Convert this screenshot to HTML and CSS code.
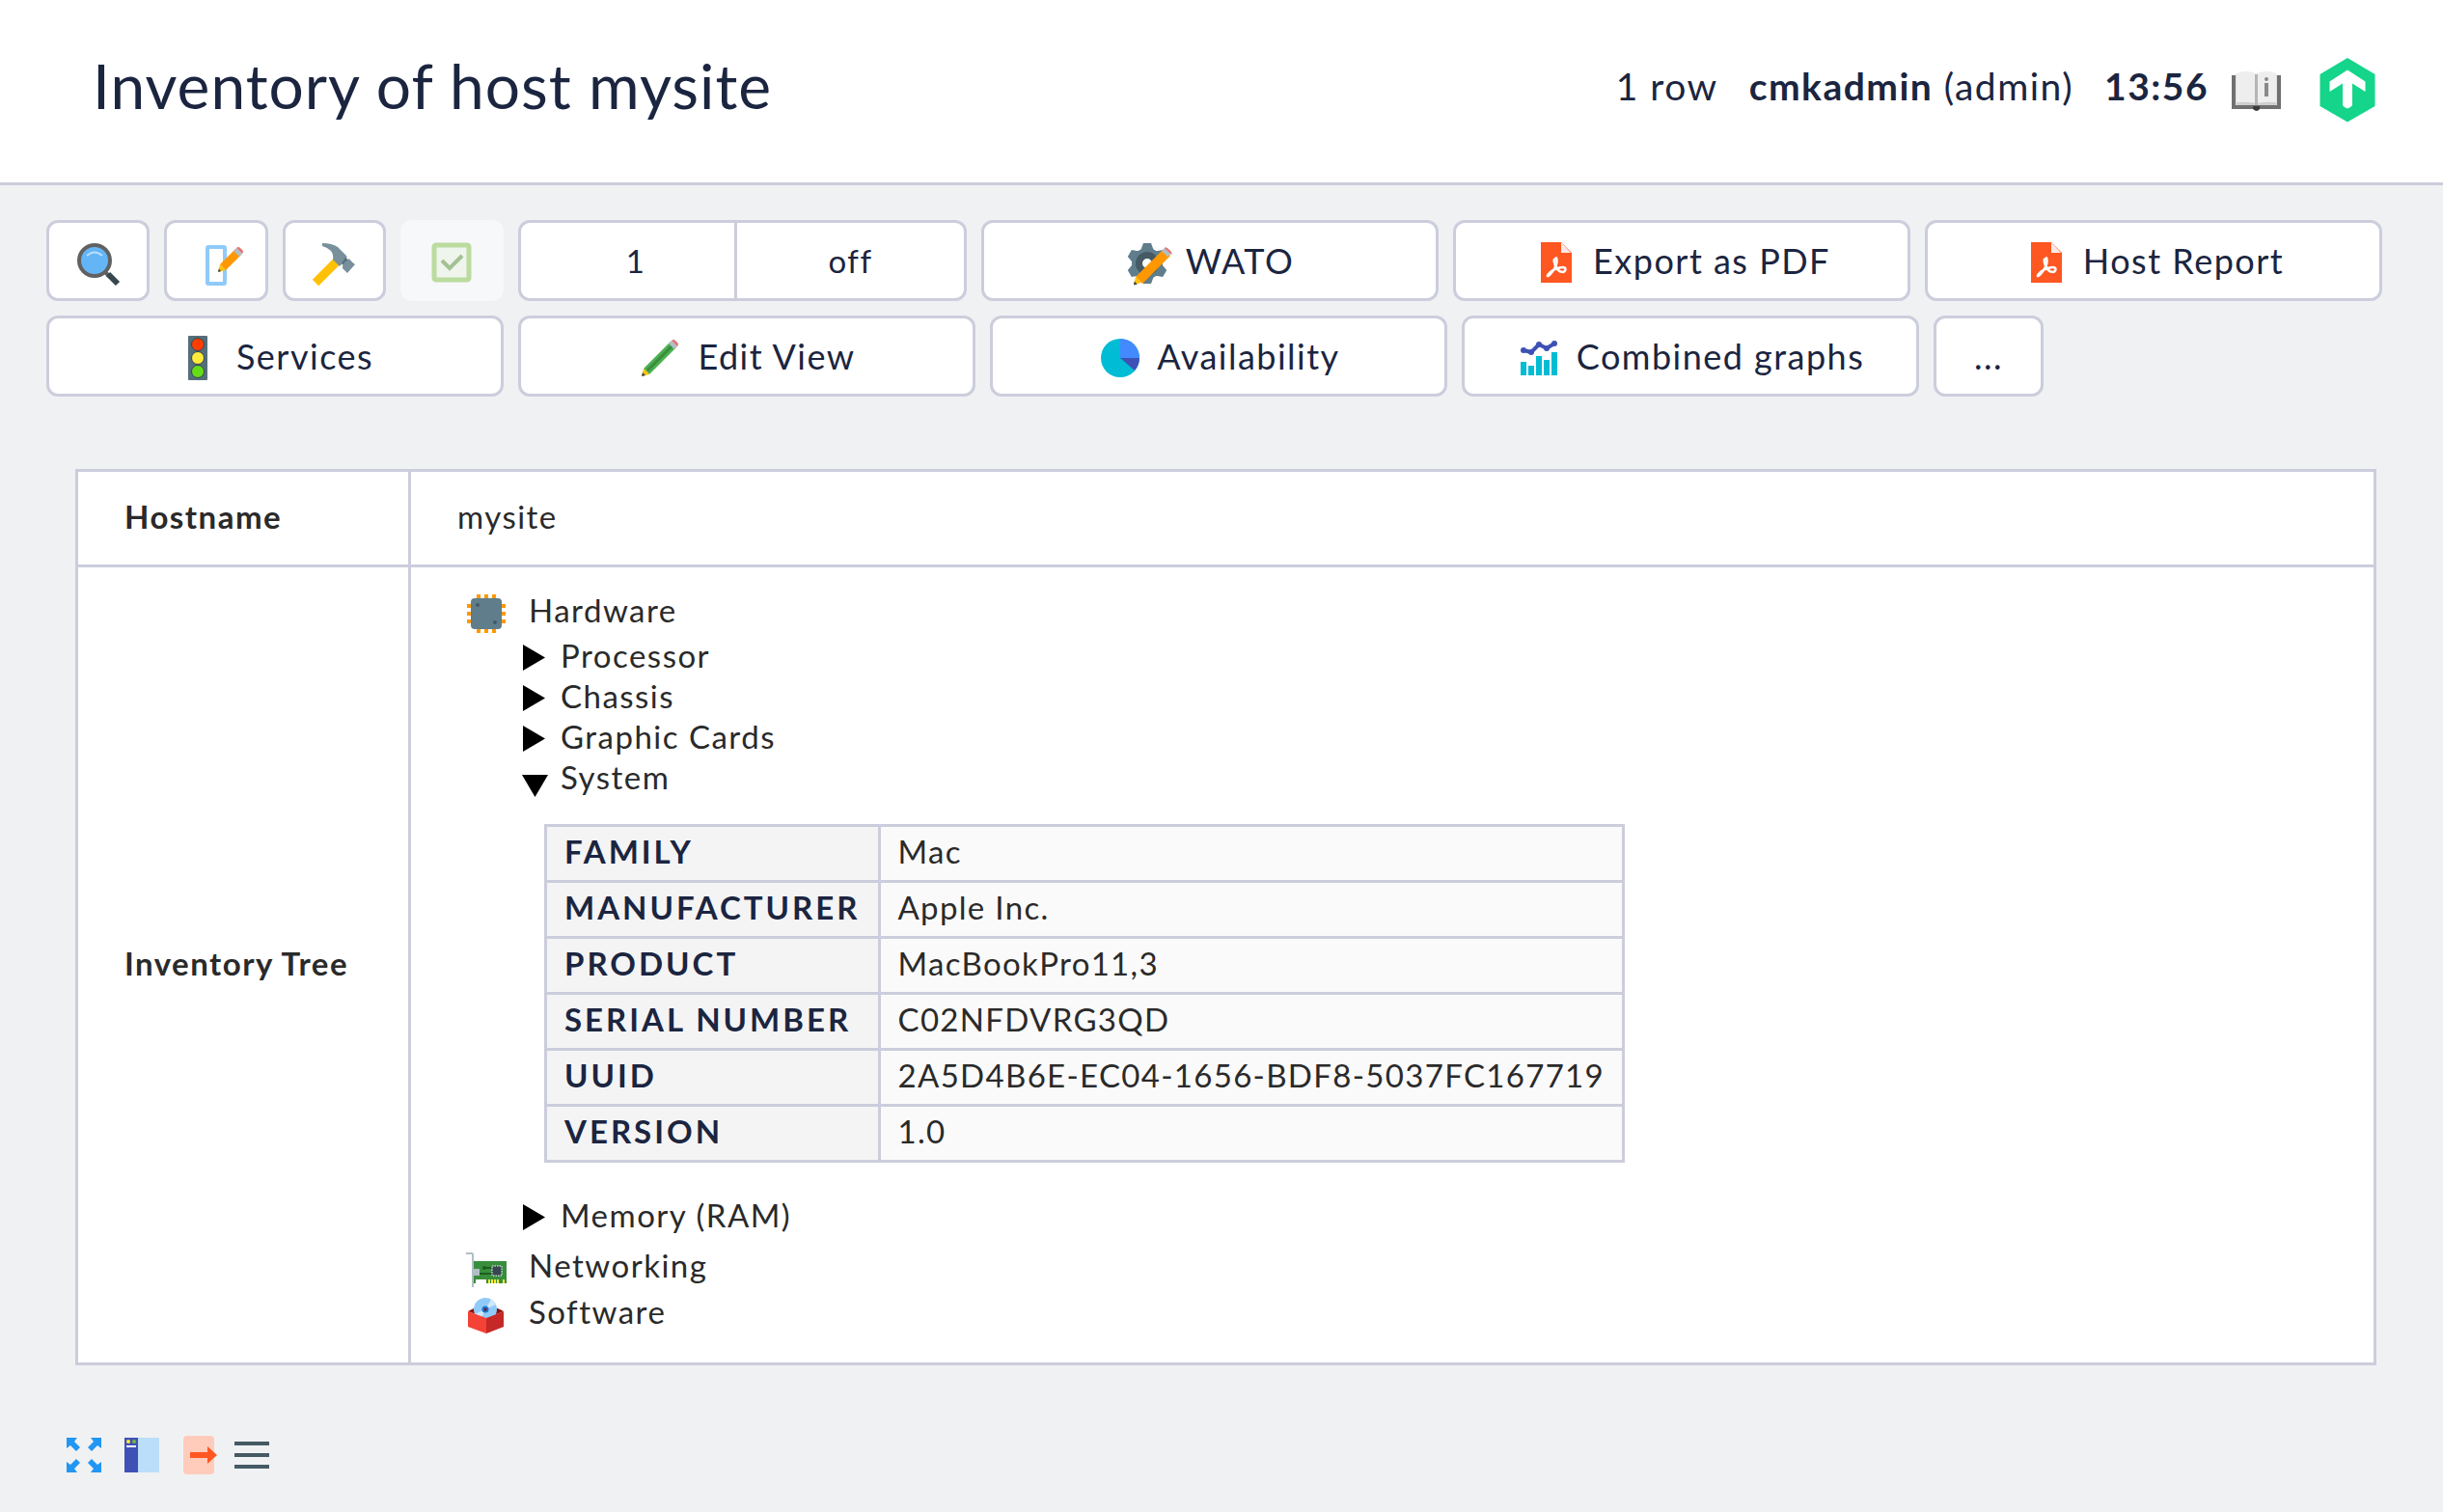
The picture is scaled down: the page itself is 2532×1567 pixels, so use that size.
FILE: index.html
```html
<!DOCTYPE html>
<html lang="en">
<head>
<meta charset="utf-8">
<title>Inventory of host mysite</title>
<link rel="stylesheet" href="styles.css">
</head>
<body>
<header class="page-header">
  <h1 class="page-title">Inventory of host mysite</h1>
  <div class="page-info">
    <span>1 row</span>
    <span><b>cmkadmin</b> (admin)</span>
    <b>13:56</b>
  </div>
  <a class="header-link" href="#manual" aria-label="Manual">
    <svg width="52" height="48" viewBox="0 0 52 48"><path fill="#707070" d="M0 13h51v35H0z"/><path fill="#e0e0e0" d="M4 12h43v32H4z"/><path fill="#eee" d="M5 11Q14 7 25 11V44Q14 40 5 42zM26 11Q36 7 46 11V42Q36 40 26 44z"/><path fill="#cfcfcf" d="M5 41Q15 40 25 42V44H5zM26 42Q36 40 46 41V44H26z"/><path fill="#b5b5b5" d="M24 12h3v32h-3z"/><path fill="#3c3c3c" d="M22 45h7v3q-3 4-7 0z"/><path fill="#8a8a8a" d="M34 21h4v14h-4z"/><circle cx="36" cy="17" r="2" fill="#8a8a8a"/></svg>
  </a>
  <a class="header-link header-logo" href="#home" aria-label="Home">
    <svg width="58" height="66" viewBox="0 0 58 66"><path fill="#15d58b" d="M29 4 57.500 21V54L29 70.500.500 54V21z"/><path fill="#fff" d="M29 16.500 47.500 28.500V39L34 30.500V52.500Q34 54.500 29 56.500Q24 54.500 24 52.500V30.500L10.500 39V28.500z"/></svg>
  </a>
</header>

<nav class="toolbar">
  <div class="icon-group">
    <button class="btn btn-icon" type="button" aria-label="Filter"><svg width="48" height="48" viewBox="0 0 48 48"><path stroke="#616161" stroke-width="4" d="M30 35l6 6"/><path stroke="#37474f" stroke-width="6" d="M34 38l10 10"/><circle cx="20" cy="24" r="16" fill="#64b5f6" stroke="#616161" stroke-width="4"/><path fill="none" stroke="#bbdefb" stroke-width="2" d="M12 19q8-7 16 0"/></svg></button>
    <button class="btn btn-icon" type="button" aria-label="Edit display options"><svg width="48" height="48" viewBox="0 0 48 48"><rect x="15" y="10" width="18" height="38" rx="1" fill="none" stroke="#90caf9" stroke-width="4"/><path fill="#ff9800" d="M28 28 44 12 50 18 34 34z"/><path fill="#b0bec5" d="M42 14l3-3 6 6-3 3z"/><path fill="#e57373" d="M45 11q2-2 4 0l2 2q2 2 0 4z"/><path fill="#ffc107" d="M28 28l6 6-8 2z"/><path fill="#37474f" d="M26.700 32.500l2.500 2.500-3.200 1z"/></svg></button>
    <button class="btn btn-icon" type="button" aria-label="Commands"><svg width="48" height="48" viewBox="0 0 48 48"><path stroke="#ffc107" stroke-width="9" d="M5 47 27 25"/><path fill="#78909c" d="M12 6Q22 6 28 10L37 19Q38 21 37 23L30 30L23 23Q25 13 12 9z"/><path fill="#546e7a" d="M36 21l6 5-5 6-5-5z"/><path fill="#78909c" d="M40 22q1 2 6 6l-8 9-5-5q0-4 2-6z"/></svg></button>
    <button class="btn btn-icon" type="button" aria-label="Checkboxes" disabled><svg width="48" height="48" viewBox="0 0 48 48"><rect x="6" y="8" width="36" height="36" rx="2" fill="#eff4ec" stroke="#bbdb9f" stroke-width="5"/><path fill="none" stroke="#a2c293" stroke-width="4" d="M14 24l8 8 13-13"/></svg></button>
  </div>
  <div class="btn toggle-group">
    <button class="toggle toggle-columns" type="button">1</button>
    <button class="toggle" type="button">off</button>
  </div>
  <button class="btn btn-wide" type="button"><svg width="48" height="48" viewBox="0 0 48 48"><g fill="#607d8b"><circle cx="22" cy="27" r="16"/><path id="t" d="M18 6h8l3 8v26l-3 8h-8l-3-8V14z"/><path d="M18 6h8l3 8v26l-3 8h-8l-3-8V14z" transform="rotate(60 22 27)"/><path d="M18 6h8l3 8v26l-3 8h-8l-3-8V14z" transform="rotate(120 22 27)"/></g><circle cx="22" cy="27" r="8.500" fill="#fff" stroke="#455a64" stroke-width="7"/><path fill="#ff9800" d="M10 41 39 12 46 19 17 48z"/><path fill="#b0bec5" d="M37 14l4-4 6 6-4 4z"/><path fill="#e57373" d="M40 11q1-1 3 0l4 4q1 2 0 3z"/><path fill="#ffc107" d="M10 41l6 6-8 2z"/><path fill="#37474f" d="M8.700 45.500l3 3-3.700 1z"/></svg>WATO</button>
  <button class="btn btn-wide" type="button"><svg width="48" height="48" viewBox="0 0 48 48"><path fill="#ff5722" d="M8 5h21l11 11v31H8z"/><path fill="#fbe9e7" d="M29 5l10 11H29z"/><path fill="none" stroke="#fff" stroke-width="2.500" d="M23.500 22c-3 0-2 5 1 10s9 5 9 1-9-1-13 1-7 7-5 6 9-9 9-15-1-3-1-3z"/></svg>Export as PDF</button>
  <button class="btn btn-wide" type="button"><svg width="48" height="48" viewBox="0 0 48 48"><path fill="#ff5722" d="M8 5h21l11 11v31H8z"/><path fill="#fbe9e7" d="M29 5l10 11H29z"/><path fill="none" stroke="#fff" stroke-width="2.500" d="M23.500 22c-3 0-2 5 1 10s9 5 9 1-9-1-13 1-7 7-5 6 9-9 9-15-1-3-1-3z"/></svg>Host Report</button>
  <button class="btn btn-wide" type="button"><svg width="48" height="48" viewBox="0 0 48 48"><rect x="12" y="3" width="20" height="46" rx="1" fill="#546e7a"/><g stroke="#37474f"><circle cx="22" cy="12" r="6.500" fill="#ff3d00"/><circle cx="22" cy="26" r="6.500" fill="#ffeb3b"/><circle cx="22" cy="40" r="6.500" fill="#64dd17"/></g></svg>Services</button>
  <button class="btn btn-wide" type="button"><svg width="48" height="48" viewBox="0 0 48 48"><path fill="#4caf50" d="M6 37 34 9 40 15 12 43z"/><path stroke="#388e3c" stroke-width="3" d="M10 39 36 13"/><path fill="#b0bec5" d="M32 11l3-3 6 6-3 3z"/><path fill="#e57373" d="M35 8q2-2 4 0l2 2q2 2 0 4z"/><path fill="#ffc107" d="M6 37l6 6-8 2z"/><path fill="#37474f" d="M5 41l3 3-4 1z"/></svg>Edit View</button>
  <button class="btn btn-wide" type="button"><svg width="48" height="48" viewBox="0 0 48 48"><circle cx="24" cy="26" r="20" fill="#00bcd4"/><path fill="#448aff" d="M24 6a20 20 0 0 1 20 20H24z"/><path fill="#3f51b5" d="M44 26a20 20 0 0 1-5 13L24 26z"/></svg>Availability</button>
  <button class="btn btn-wide" type="button"><svg width="48" height="48" viewBox="0 0 48 48"><path fill="#00bcd4" d="M4 30h6v14H4zM12 34h6v10h-6zM20 24h6v20h-6zM28 28h6v16h-6zM36 20h6v24h-6z"/><path fill="none" stroke="#3f51b5" stroke-width="4" d="M7 18l8 2 8-8 8 4 8-5"/><g fill="#3f51b5"><circle cx="7" cy="18" r="3"/><circle cx="15" cy="20" r="3"/><circle cx="23" cy="12" r="3"/><circle cx="31" cy="16" r="3"/><circle cx="39" cy="11" r="3"/></g></svg>Combined graphs</button>
  <button class="btn btn-more" type="button">...</button>
</nav>

<main class="content">
  <table class="data">
    <tr><th scope="row">Hostname</th><td>mysite</td></tr>
    <tr>
      <th scope="row">Inventory Tree</th>
      <td class="tree-cell">
        <ul class="tree">
          <li>
            <button class="node" type="button"><svg width="40" height="40" viewBox="0 0 40 40"><g transform="translate(0 4)"><path fill="#ff9800" d="M10 0h4v40h-4zM18 0h4v40h-4zM26 0h4v40h-4zM0 10h40v4H0zM0 18h40v4H0zM0 26h40v4H0z"/><rect x="4" y="4" width="32" height="32" rx="4" fill="#607d8b"/><g fill="#455a64"><circle cx="11" cy="11" r="2"/><circle cx="29" cy="29" r="2"/></g></g></svg>Hardware</button>
            <ul class="branch">
              <li><button class="leaf" type="button"><svg width="27" height="42" viewBox="0 0 27 42"><path d="M1 10v27l23-13.500z"/></svg>Processor</button></li>
              <li><button class="leaf" type="button"><svg width="27" height="42" viewBox="0 0 27 42"><path d="M1 10v27l23-13.500z"/></svg>Chassis</button></li>
              <li><button class="leaf" type="button"><svg width="27" height="42" viewBox="0 0 27 42"><path d="M1 10v27l23-13.500z"/></svg>Graphic Cards</button></li>
              <li>
                <button class="leaf" type="button" aria-expanded="true"><svg width="27" height="42" viewBox="0 0 27 42"><path d="M0 19h27L13.500 42z"/></svg>System</button>
                <table class="details">
                  <tr><th scope="row">FAMILY</th><td>Mac</td></tr>
                  <tr><th scope="row">MANUFACTURER</th><td>Apple Inc.</td></tr>
                  <tr><th scope="row">PRODUCT</th><td>MacBookPro11,3</td></tr>
                  <tr><th scope="row">SERIAL NUMBER</th><td>C02NFDVRG3QD</td></tr>
                  <tr><th scope="row">UUID</th><td>2A5D4B6E-EC04-1656-BDF8-5037FC167719</td></tr>
                  <tr><th scope="row">VERSION</th><td>1.0</td></tr>
                </table>
              </li>
              <li><button class="leaf" type="button"><svg width="27" height="42" viewBox="0 0 27 42"><path d="M1 10v27l23-13.500z"/></svg>Memory (RAM)</button></li>
            </ul>
          </li>
          <li><button class="node" type="button"><svg width="40" height="40" viewBox="0 0 40 40"><path fill="#388e3c" d="M6 16h35v23H6z"/><path fill="#fff" d="M9 35h11v4H9z"/><path fill="#ffeb3b" d="M22 35h2v4h-2zM25 35h2v4h-2zM28 35h2v4h-2zM31 35h2v4h-2zM37 35h2v4h-2z"/><path stroke="#1b5e20" stroke-width="2" d="M18 23h8M12 29h14"/><circle cx="18" cy="23" r="2" fill="#1b5e20"/><rect x="26" y="21" width="10" height="10" fill="#37474f" stroke="#fff" stroke-dasharray="1.500 1"/><path fill="#b0bec5" d="M-1 7h6q2 0 2 2v15h6v7H7v12H5V9h-6z"/></svg>Networking</button></li>
          <li><button class="node" type="button"><svg width="40" height="40" viewBox="0 0 40 40"><path fill="#8e1010" d="M1 20l6-3h25l6 3-18 7z"/><circle cx="19" cy="18" r="12" fill="#90caf9"/><path fill="#d0e8fb" d="M19 18 25 7.500Q28 9 30 13zM19 18 8 23Q10 27 14 29z"/><circle cx="19" cy="18" r="3.500" fill="#1976d2"/><circle cx="19" cy="18" r="1.500" fill="#8e1010"/><path fill="#f44336" d="M1 20l19 7v16L1 36z"/><path fill="#c62828" d="M38 20l-18 7v16l18-7z"/></svg>Software</button></li>
        </ul>
      </td>
    </tr>
  </table>
</main>

<footer class="footer">
  <button type="button" aria-label="Full screen"><svg width="36" height="36" viewBox="0 0 36 36"><path fill="#2196f3" d="M0 0h11L8 4l6 6-4 4-6-6-4 3zM36 0v11l-4-3-6 6-4-4 6-6-3-4zM0 36V25l4 3 6-6 4 4-6 6 3 4zM36 36H25l3-4-6-6 4-4 6 6 4-3z"/></svg></button>
  <button type="button" aria-label="Toggle sidebar"><svg width="36" height="36" viewBox="0 0 36 36"><path fill="#bbdefb" d="M0 0h36v36H0z"/><path fill="#3f51b5" d="M0 0h14v36H0z"/><circle cx="4" cy="4" r="2" fill="#ffeb3b"/><circle cx="10" cy="4" r="2" fill="#7cb342"/><path fill="#fff" d="M2 8h10v2H2z"/></svg></button>
  <button type="button" aria-label="Log out"><svg width="30" height="40" viewBox="0 0 30 40"><rect x="1" width="32" height="40" rx="4" fill="#ffccbc"/><path fill="#ff5722" d="M8 17h18v-6l10 9-10 9v-6H8z"/></svg></button>
  <button type="button" aria-label="Menu"><svg width="36" height="36" viewBox="0 0 36 36"><path fill="#455a64" d="M0 4h36v4H0zM0 16h36v4H0zM0 28h36v4H0z"/></svg></button>
</footer>
</body>
</html>
```
FILE: styles.css
```css
* { box-sizing: border-box; }

body {
  margin: 0;
  background: #f0f1f3;
  color: #2a2a2a;
  font-family: Lato, sans-serif;
  font-size: 33px;
  line-height: 42px;
  letter-spacing: 0.045em;
}

button {
  margin: 0;
  padding: 0;
  border: 0;
  background: none;
  color: inherit;
  font: inherit;
  letter-spacing: inherit;
  cursor: pointer;
}

svg { display: block; flex: none; overflow: visible; }

/* Header */
.page-header {
  display: flex;
  align-items: center;
  padding: 50px 70px 61px 96px;
  border-bottom: 3px solid #cccddc;
  background: #fff;
  color: #1b2540;
}
.page-title {
  flex: 1;
  margin: 0;
  font-size: 64px;
  font-weight: 400;
  line-height: 78px;
  letter-spacing: 1px;
}
.page-info {
  display: flex;
  gap: 32px;
  font-size: 39px;
  line-height: 48px;
}
.header-link { margin-left: 24px; }
.header-logo { margin-left: 39px; }

/* Context buttons */
.toolbar {
  display: flex;
  flex-wrap: wrap;
  gap: 15px;
  padding: 36px 48px 75px;
  color: #1b2540;
}
.btn {
  height: 84px;
  border: 3px solid #cccddc;
  border-radius: 12px;
  background: #fff;
}
.icon-group {
  display: flex;
  gap: 15px;
  width: 474px;
}
.btn-icon {
  display: flex;
  flex: 1;
  align-items: center;
  justify-content: center;
}
.btn-icon:disabled {
  border-color: #f7f8fa;
  background: #f7f8fa;
  cursor: default;
}
.toggle-group { display: flex; width: 465px; }
.toggle { flex: 1; }
.toggle-columns {
  flex: none;
  width: 224px;
  padding-left: 17px;
  border-right: 3px solid #cccddc;
}
.btn-wide {
  display: flex;
  align-items: center;
  justify-content: center;
  gap: 14px;
  width: 474px;
  font-size: 36px;
}
.btn-more { width: 114px; font-size: 36px; }

/* Host data */
.content { padding: 0 69px 0 78px; }
.data, .details {
  border-collapse: separate;
  border-spacing: 3px;
  background: #cccddc;
}
.data { width: 100%; }
.data th, .data td { text-align: left; }
.data > tbody > tr > th,
.data > tbody > tr > td {
  padding: 25px 48px 29px;
  background: #fff;
}
.data > tbody > tr > th { width: 342px; padding-right: 0; }
.data > tbody > tr > .tree-cell { padding: 20px 48px 29px; }

.tree, .branch { margin: 0; padding: 0; list-style: none; }
.branch { padding: 2px 0 7px 67px; }
.node, .leaf { display: flex; align-items: center; }
.node { gap: 24px; height: 48px; padding-left: 10px; }
.leaf { gap: 13px; height: 42px; }

.details { margin: 28px 0 33px 23px; }
.details th, .details td {
  height: 55px;
  padding: 4px 18px 9px;
  background: #fafafa;
  letter-spacing: 0.04em;
}
.details th {
  background: #f4f4f5;
  color: #1b2540;
  letter-spacing: 3px;
}

/* Footer */
.footer {
  display: flex;
  align-items: center;
  gap: 24px;
  padding: 73px 69px 39px;
}
```
